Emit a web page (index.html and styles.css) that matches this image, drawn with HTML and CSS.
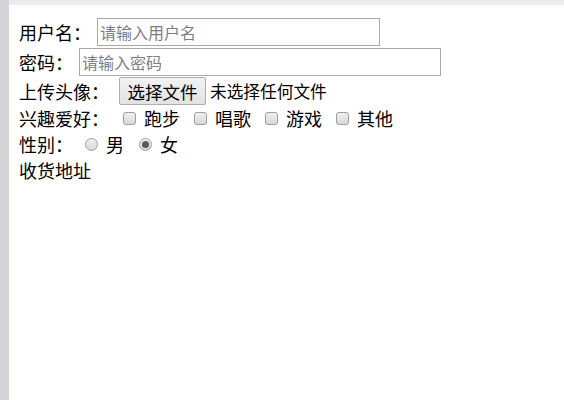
FILE: index.html
```html
<!DOCTYPE html>
<html lang="zh">
<head>
<meta charset="utf-8">
<title>表单</title>
<link rel="stylesheet" href="styles.css">
</head>
<body>
<div class="frame">
  <div class="side"></div>
  <div class="main">
    <div class="topbar"></div>
    <form class="form">
      <div class="row row-input">
        <label class="lbl">用户名：</label>
        <input class="text text-user" type="text" placeholder="请输入用户名">
      </div>
      <div class="row row-input">
        <label class="lbl">密码：</label>
        <input class="text text-pass" type="password" placeholder="请输入密码">
      </div>
      <div class="row row-file">
        <label class="lbl">上传头像：</label>
        <button type="button" class="filebtn">选择文件</button>
        <span class="filename">未选择任何文件</span>
      </div>
      <div class="row row-text">
        <span class="lbl">兴趣爱好：</span>
        <label class="opt opt-first"><input class="box" type="checkbox"><span>跑步</span></label>
        <label class="opt"><input class="box" type="checkbox"><span>唱歌</span></label>
        <label class="opt"><input class="box" type="checkbox"><span>游戏</span></label>
        <label class="opt"><input class="box" type="checkbox"><span>其他</span></label>
      </div>
      <div class="row row-text">
        <span class="lbl">性别：</span>
        <label class="opt opt-radio-first"><input class="radio" type="radio" name="sex"><span>男</span></label>
        <label class="opt opt-radio"><input class="radio" type="radio" name="sex" checked><span>女</span></label>
      </div>
      <div class="row row-text">
        <span class="lbl">收货地址</span>
      </div>
    </form>
  </div>
</div>
</body>
</html>
```

FILE: styles.css
```css
html, body {
  margin: 0;
  padding: 0;
  height: 100%;
  background: #ffffff;
}
body {
  font-family: "Noto Sans CJK SC", "Liberation Sans", sans-serif;
  font-size: 18px;
  color: #000;
}
.frame {
  display: flex;
  height: 100%;
}
.side {
  width: 9px;
  flex: none;
  background: #d5d5d9;
}
.main {
  flex: 1;
  display: flex;
  flex-direction: column;
}
.topbar {
  height: 5px;
  background: #ededf1;
}
.form {
  padding: 12px 0 0 10px;
}
.row {
  display: flex;
  align-items: center;
  white-space: nowrap;
}
.row-input {
  height: 30px;
}
.row-file {
  height: 28px;
}
.row-text {
  height: 26px;
}
.lbl {
  line-height: 26px;
}
.text {
  box-sizing: border-box;
  height: 28px;
  margin: 0 0 0 6px;
  padding: 0 2px;
  border: 1px solid #a9a9a9;
  border-radius: 0;
  font-family: "Noto Sans CJK SC", sans-serif;
  font-size: 16px;
  outline: none;
}
.text::placeholder {
  color: #7d7d88;
}
.text-user {
  width: 283px;
}
.text-pass {
  width: 362px;
}
.filebtn {
  box-sizing: border-box;
  height: 28px;
  width: 87px;
  margin-left: 10px;
  padding: 0;
  border: 1px solid #adadad;
  border-radius: 2px;
  background: linear-gradient(#f2f2f2, #e3e3e3);
  font-family: "Noto Sans CJK SC", sans-serif;
  font-size: 17.5px;
  color: #000;
}
.filename {
  margin-left: 4px;
  font-size: 16.7px;
}
.opt {
  display: flex;
  align-items: center;
  margin-left: 14px;
}
.opt-first {
  margin-left: 14px;
}
.opt span {
  margin-left: 8px;
}
.box, .radio {
  -webkit-appearance: none;
  appearance: none;
  box-sizing: border-box;
  width: 13px;
  height: 13px;
  margin: 0;
  border: 1px solid #9e9e9e;
  background: linear-gradient(#f0f0f0, #d8d8d8);
}
.box {
  border-radius: 3px;
}
.radio {
  border-radius: 50%;
  position: relative;
}
.radio:checked::after {
  content: "";
  position: absolute;
  left: 2px;
  top: 2px;
  width: 7px;
  height: 7px;
  border-radius: 50%;
  background: #5a5a5a;
}
.opt-radio-first {
  margin-left: 12px;
}
.opt-radio {
  margin-left: 15px;
}
```
